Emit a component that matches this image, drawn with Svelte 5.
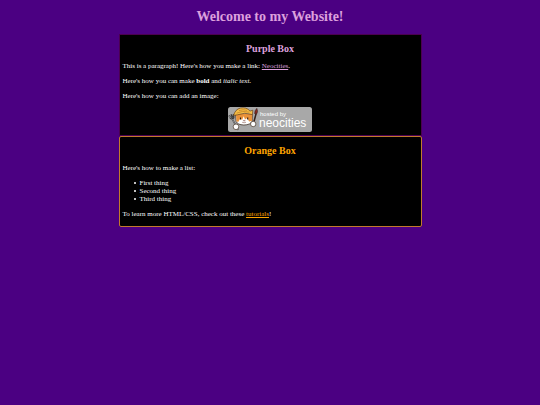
<script lang="ts">
  const things = ['First thing', 'Second thing', 'Third thing'];
</script>

<main>
  <h1>Welcome to my Website!</h1>

  <section class="box purple">
    <h2>Purple Box</h2>

    <p>This is a paragraph! Here's how you make a link: <a href="https://neocities.org">Neocities</a>.</p>

    <p>Here's how you can make <strong>bold</strong> and <em>italic text</em>.</p>

    <p>Here's how you can add an image:</p>

    <svg class="badge" viewBox="0 0 84 25" role="img" aria-label="Hosted by Neocities">
      <rect width="84" height="25" rx="2.5" fill="#a8a8a8" />

      <!-- fork -->
      <path d="M.8 8.6l2.6 3M3 7.4l1.6 3.2M5.4 7.2l.4 3.4M2 10.8q2.2 2.2 4.2-.4M4.2 12l6 11" fill="none" stroke="#3a3a3a" stroke-width="1.5" />
      <path d="M.8 8.6l2.6 3M4.2 12l6 11" fill="none" stroke="#b5b5b5" stroke-width=".6" />

      <!-- brush -->
      <path d="M28 7l-3.2 12" stroke="#35201a" stroke-width="1.5" />
      <path d="M28.8 1.4q1.6 3.2-.3 5.8l-1.8-.5q-.2-3.3 2.1-5.3z" fill="#8a2a22" stroke="#30201c" stroke-width=".6" />

      <!-- cat -->
      <path d="M7.6 8l.6 6.6q1.4 3.2 7.6 3.4 6.8-.1 8.4-3.8l.4-6.4z" fill="#fff" stroke="#332217" stroke-width=".7" />
      <path d="M8 7h16.3l-.2 6.8-3 .6-1.9-3.4-2.2 1.6-1.3-3.4-1.5 3.5-2.2-.7-1.8 3-1.8-.7z" fill="#e9923a" />
      <path d="M5.6 8.4Q7.2 2.4 12.3 1.1q6.2-1.3 9.7 3l2.8-.9-.3 4.4q-8-2.7-15 .2z" fill="#f4bd45" stroke="#69421a" stroke-width=".7" />
      <path d="M8.7 6.1q5.8-3 12.6-.9M11 3.6q4-1.6 8-.3" fill="none" stroke="#b97422" stroke-width=".6" />
      <path d="M12.5 10.6v2M19.7 10.4v2" stroke="#201713" stroke-width="1.1" />
      <path d="M15.3 13.4h1.8l-.9.9zM14.2 15.3q2 1 3.8-.1" fill="none" stroke="#703a30" stroke-width=".5" />
      <circle cx="8" cy="19.8" r="2.8" fill="#fff" stroke="#443224" stroke-width=".7" />
      <circle cx="25.2" cy="17" r="2.7" fill="#fff" stroke="#443224" stroke-width=".7" />

      <text class="hosted" x="32" y="9">hosted by</text>
      <text class="name" x="31" y="20">neocities</text>
    </svg>
  </section>

  <section class="box orange">
    <h2>Orange Box</h2>

    <p>Here's how to make a list:</p>

    <ul>
      {#each things as thing}
        <li>{thing}</li>
      {/each}
    </ul>

    <p>To learn more HTML/CSS, check out these <a href="https://neocities.org/tutorials">tutorials</a>!</p>
  </section>
</main>

<style>
  :global(body) {
    margin: 0;
    background: #4b0082;
  }

  main {
    padding: 8px 3px;
    color: #fff;
    font-family: "Liberation Serif", "Times New Roman", serif;
    font-size: 7px;
    line-height: 8px;
  }

  h1 {
    margin: 0 0 9px;
    color: #dda0dd;
    font-size: 14px;
    line-height: 17px;
    text-align: center;
  }

  h2 {
    margin: 8px 0 7px;
    font-size: 10px;
    line-height: 12px;
    text-align: center;
  }

  p,
  ul {
    margin: 7px 0;
  }

  ul {
    padding-left: 11px;
    list-style: none;
  }

  li {
    display: flex;
    align-items: center;
    gap: 4px;
  }

  li::before {
    content: "";
    width: 2px;
    height: 2px;
    border-radius: 50%;
    background: #fff;
  }

  .box {
    display: flow-root;
    box-sizing: border-box;
    max-width: 303px;
    margin: 0 auto;
    padding: 0 3px;
    border: 1px solid;
    background: #000;
  }

  .purple {
    border-color: #4b0050;
  }

  .purple h2,
  .purple a {
    color: #dda0dd;
  }

  .orange {
    padding-bottom: 1px;
    border-color: #c27a2c;
    border-radius: 2px;
  }

  .orange h2,
  .orange a {
    color: #ffa500;
  }

  .badge {
    display: block;
    width: 84px;
    height: 25px;
    margin: 0 auto 3px;
  }

  .badge text {
    fill: #fff;
    font-family: "Liberation Sans", Arial, sans-serif;
  }

  .hosted {
    font-size: 6px;
  }

  .name {
    font-size: 12px;
  }
</style>
